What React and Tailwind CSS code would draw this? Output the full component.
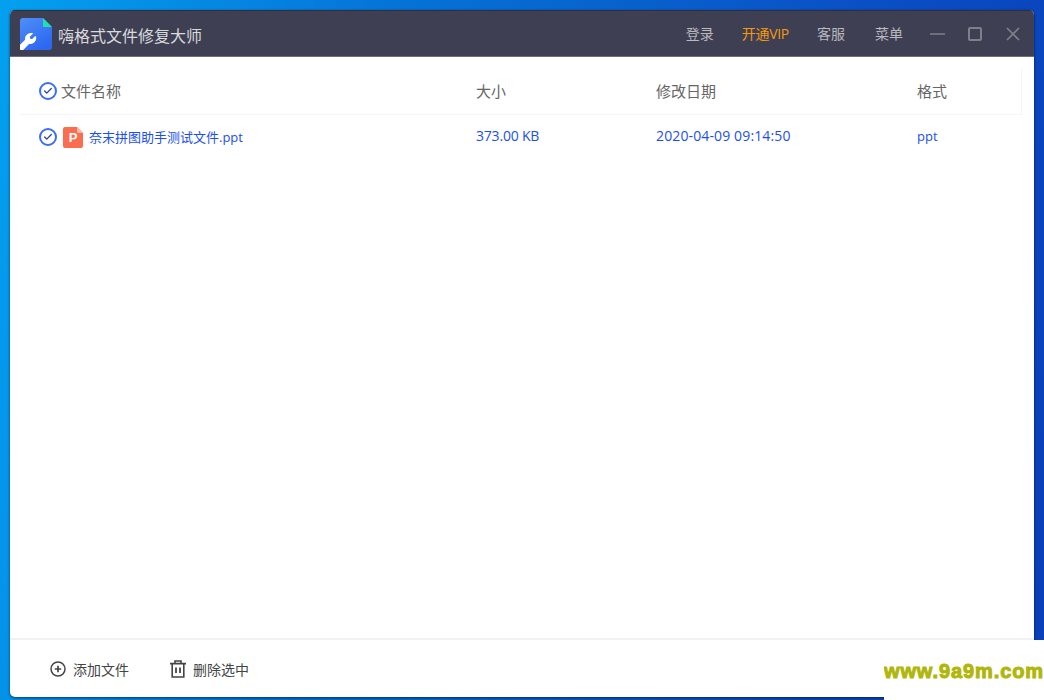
import { Check } from "lucide-react";

const FONT = "font-['Open_Sans','Noto_Sans_CJK_SC',sans-serif]";

function CheckCircle() {
  return (
    <span className="flex h-[18px] w-[18px] shrink-0 items-center justify-center rounded-full border-2 border-[#3b6ef5]">
      <Check size={10} strokeWidth={3} className="text-[#24439c]" />
    </span>
  );
}

function AppLogo() {
  return (
    <svg width="32" height="32" viewBox="0 0 32 32" className="shrink-0">
      <defs>
        <linearGradient id="logoBg" x1="0" y1="0" x2="0.6" y2="1">
          <stop offset="0" stopColor="#4f8ff8" />
          <stop offset="1" stopColor="#2d68f0" />
        </linearGradient>
      </defs>
      <path d="M3 0H23L32 9V29a3 3 0 0 1-3 3H3a3 3 0 0 1-3-3V3a3 3 0 0 1 3-3z" fill="url(#logoBg)" />
      <path d="M23 0L32 9H23z" fill="#1fe0b0" />
      <path
        transform="translate(-3.5 2.5)"
        d="M19 16.5a5.2 5.2 0 0 1-6.4 6.2L7 28.4a2.3 2.3 0 0 1-3.4-3.3l5.7-5.6A5.2 5.2 0 0 1 15.6 13.2l-3 3 .6 2.5 2.5.6 3-3z"
        fill="#fff"
        stroke="#fff"
        strokeWidth="1.2"
      />
    </svg>
  );
}

function PptIcon() {
  return (
    <span className="relative flex h-[21px] w-5 shrink-0 items-center justify-center text-[13px] font-bold text-white [font-family:'Liberation_Sans',sans-serif]">
      <svg width="20" height="21" viewBox="0 0 20 21" className="absolute inset-0">
        <path d="M2 0H14L20 6V19a2 2 0 0 1-2 2H2a2 2 0 0 1-2-2V2a2 2 0 0 1 2-2z" fill="#fb6d50" />
        <path d="M14 0L20 6H15a1 1 0 0 1-1-1z" fill="#fdb5a4" />
      </svg>
      <span className="relative mt-px">P</span>
    </span>
  );
}

function WindowIcons() {
  return (
    <>
      <svg width="15" height="14" viewBox="0 0 15 14" className="ml-[27px]" stroke="#80808a" strokeWidth="1.6" fill="none">
        <path d="M0 7H15" />
      </svg>
      <svg width="14" height="14" viewBox="0 0 14 14" className="ml-[23px]" stroke="#80808a" strokeWidth="2" fill="none">
        <rect x="1" y="1" width="12" height="12" rx="1" />
      </svg>
      <svg width="14" height="14" viewBox="0 0 14 14" className="ml-[24px]" stroke="#80808a" strokeWidth="1.6" fill="none">
        <path d="M1 1L13 13M13 1L1 13" />
      </svg>
    </>
  );
}

function AddIcon() {
  return (
    <svg width="16" height="16" viewBox="0 0 16 16" stroke="#444444" strokeWidth="1.5" fill="none" className="shrink-0">
      <circle cx="8" cy="8" r="7" />
      <path d="M8 4.8V11.2M4.8 8H11.2" strokeWidth="1.7" />
    </svg>
  );
}

function TrashIcon() {
  return (
    <svg width="16" height="18" viewBox="0 0 16 18" stroke="#444444" strokeWidth="1.6" fill="none" className="ml-[41px] shrink-0">
      <path d="M0 3.6H16M5 3.6V1h6v2.6M2.2 3.6V17h11.6V3.6" />
      <path d="M6 7.5v5.5M10 7.5v5.5" strokeWidth="1.8" />
    </svg>
  );
}

export default function App() {
  return (
    <div className={`h-[700px] w-[1044px] overflow-hidden bg-[linear-gradient(100deg,#04a0f0_0%,#0572d6_35%,#0a4fc4_75%,#0a3fb8_100%)] pl-2.5 pr-2.5 pt-2.5 ${FONT}`}>
      <div className="relative flex h-[687px] w-[1024px] flex-col overflow-hidden rounded-[5px] bg-white shadow-[0_1px_3px_rgba(0,0,0,0.6)]">
        {/* Title bar */}
        <div className="flex h-[47px] shrink-0 items-center border-b border-t border-b-[#6d6d80] border-t-[#2e2e3c] bg-[#3f3f53] pl-2.5 pr-3.5">
          <AppLogo />
          <span className="ml-1.5 mt-1 text-base text-[#d9d9dd]">嗨格式文件修复大师</span>
          <div className="ml-auto flex items-center text-[14px] text-[#b9b9bf]">
            <span>登录</span>
            <span className="ml-7 tracking-[-0.3px] text-[#f59a0c]">开通VIP</span>
            <span className="ml-7">客服</span>
            <span className="ml-[30px]">菜单</span>
            <WindowIcons />
          </div>
        </div>

        {/* File table */}
        <div className="flex-1 pl-2.5 pr-3 pt-[11px]">
          <div className="flex h-[47px] items-center border-b border-r border-[#f6f6f8] pl-[19px] text-[15px] text-[#666666]">
            <div className="flex w-[437px] items-center gap-1">
              <CheckCircle />
              <span>文件名称</span>
            </div>
            <div className="w-[180px]">大小</div>
            <div className="w-[261px]">修改日期</div>
            <div>格式</div>
          </div>
          <div className="flex h-[44px] items-center pl-[19px] text-[14px] text-[#1a4ff0]">
            <div className="flex w-[437px] items-center">
              <CheckCircle />
              <span className="ml-1.5"><PptIcon /></span>
              <span className="ml-1.5 mt-0.5 text-[13px]">奈末拼图助手测试文件.ppt</span>
            </div>
            <div className="mb-1 w-[180px] tracking-[-0.2px]">373.00 KB</div>
            <div className="mb-1 w-[261px] tracking-[0.13px]">2020-04-09 09:14:50</div>
            <div className="text-[13px]">ppt</div>
          </div>
        </div>

        {/* Footer */}
        <div className="flex h-[59px] shrink-0 items-center border-t-2 border-[#f0f0f5] pl-10 pt-px text-[14px] text-[#444444]">
          <AddIcon />
          <span className="ml-[7px]">添加文件</span>
          <TrashIcon />
          <span className="ml-[7px]">删除选中</span>
        </div>
      </div>

      {/* Watermark */}
      <div className="absolute left-[884px] top-[640px] flex h-[60px] w-40 items-center justify-center overflow-hidden whitespace-nowrap bg-white pt-px text-[20px] font-bold tracking-[0.9px] text-[#b0b60a] [-webkit-text-stroke:1px_#b0b60a] [font-family:'Liberation_Sans',sans-serif]">
        www.9a9m.com
      </div>
    </div>
  );
}
